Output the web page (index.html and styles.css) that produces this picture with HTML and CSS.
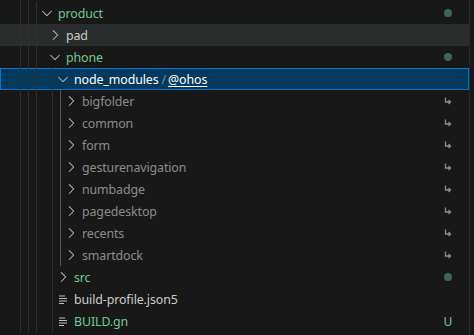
FILE: index.html
```html
<!DOCTYPE html>
<html lang="en">
<head>
    <meta charset="UTF-8">
    <title>Explorer</title>
    <link rel="stylesheet" href="styles.css">
</head>
<body>
    <div class="sidebar">
        <div class="tree">
            <div class="row cut">
                <div class="indent"><i></i><i></i></div>
            </div>

            <div class="row depth-0 untracked">
                <div class="indent"><i></i><i></i><i></i></div>
                <span class="twistie"><svg viewBox="0 0 16 16"><path d="M7.976 10.072l4.357-4.357.62.618L8.284 11h-.618L3 6.333l.619-.618 4.357 4.357z"/></svg></span>
                <span class="label">product</span>
                <span class="deco"><span class="dot"></span></span>
            </div>

            <div class="row depth-1 hover">
                <div class="indent"><i></i><i></i><i></i></div>
                <span class="twistie"><svg viewBox="0 0 16 16"><path d="M10.072 8.024L5.715 3.667l.618-.62L11 7.716v.618L6.333 13l-.618-.619 4.357-4.357z"/></svg></span>
                <span class="label">pad</span>
            </div>

            <div class="row depth-1 untracked">
                <div class="indent"><i></i><i></i><i></i></div>
                <span class="twistie"><svg viewBox="0 0 16 16"><path d="M7.976 10.072l4.357-4.357.62.618L8.284 11h-.618L3 6.333l.619-.618 4.357 4.357z"/></svg></span>
                <span class="label">phone</span>
                <span class="deco"><span class="dot"></span></span>
            </div>

            <div class="row depth-2 selected">
                <div class="indent"><i></i><i></i><i></i><i class="gap"></i><i></i></div>
                <span class="twistie"><svg viewBox="0 0 16 16"><path d="M7.976 10.072l4.357-4.357.62.618L8.284 11h-.618L3 6.333l.619-.618 4.357 4.357z"/></svg></span>
                <span class="label">node_modules<span class="sep">/</span><u>@ohos</u></span>
            </div>

            <div class="row depth-3 ignored">
                <div class="indent"><i></i><i></i><i></i><i class="gap"></i><i></i><i class="active"></i></div>
                <span class="twistie"><svg viewBox="0 0 16 16"><path d="M10.072 8.024L5.715 3.667l.618-.62L11 7.716v.618L6.333 13l-.618-.619 4.357-4.357z"/></svg></span>
                <span class="label">bigfolder</span>
                <span class="deco"><svg class="link" viewBox="0 0 8 8"><path d="M1.5 0.5v4.5h5M4.5 3l2 2-2 2"/></svg></span>
            </div>

            <div class="row depth-3 ignored">
                <div class="indent"><i></i><i></i><i></i><i class="gap"></i><i></i><i class="active"></i></div>
                <span class="twistie"><svg viewBox="0 0 16 16"><path d="M10.072 8.024L5.715 3.667l.618-.62L11 7.716v.618L6.333 13l-.618-.619 4.357-4.357z"/></svg></span>
                <span class="label">common</span>
                <span class="deco"><svg class="link" viewBox="0 0 8 8"><path d="M1.5 0.5v4.5h5M4.5 3l2 2-2 2"/></svg></span>
            </div>

            <div class="row depth-3 ignored">
                <div class="indent"><i></i><i></i><i></i><i class="gap"></i><i></i><i class="active"></i></div>
                <span class="twistie"><svg viewBox="0 0 16 16"><path d="M10.072 8.024L5.715 3.667l.618-.62L11 7.716v.618L6.333 13l-.618-.619 4.357-4.357z"/></svg></span>
                <span class="label">form</span>
                <span class="deco"><svg class="link" viewBox="0 0 8 8"><path d="M1.5 0.5v4.5h5M4.5 3l2 2-2 2"/></svg></span>
            </div>

            <div class="row depth-3 ignored">
                <div class="indent"><i></i><i></i><i></i><i class="gap"></i><i></i><i class="active"></i></div>
                <span class="twistie"><svg viewBox="0 0 16 16"><path d="M10.072 8.024L5.715 3.667l.618-.62L11 7.716v.618L6.333 13l-.618-.619 4.357-4.357z"/></svg></span>
                <span class="label">gesturenavigation</span>
                <span class="deco"><svg class="link" viewBox="0 0 8 8"><path d="M1.5 0.5v4.5h5M4.5 3l2 2-2 2"/></svg></span>
            </div>

            <div class="row depth-3 ignored">
                <div class="indent"><i></i><i></i><i></i><i class="gap"></i><i></i><i class="active"></i></div>
                <span class="twistie"><svg viewBox="0 0 16 16"><path d="M10.072 8.024L5.715 3.667l.618-.62L11 7.716v.618L6.333 13l-.618-.619 4.357-4.357z"/></svg></span>
                <span class="label">numbadge</span>
                <span class="deco"><svg class="link" viewBox="0 0 8 8"><path d="M1.5 0.5v4.5h5M4.5 3l2 2-2 2"/></svg></span>
            </div>

            <div class="row depth-3 ignored">
                <div class="indent"><i></i><i></i><i></i><i class="gap"></i><i></i><i class="active"></i></div>
                <span class="twistie"><svg viewBox="0 0 16 16"><path d="M10.072 8.024L5.715 3.667l.618-.62L11 7.716v.618L6.333 13l-.618-.619 4.357-4.357z"/></svg></span>
                <span class="label">pagedesktop</span>
                <span class="deco"><svg class="link" viewBox="0 0 8 8"><path d="M1.5 0.5v4.5h5M4.5 3l2 2-2 2"/></svg></span>
            </div>

            <div class="row depth-3 ignored">
                <div class="indent"><i></i><i></i><i></i><i class="gap"></i><i></i><i class="active"></i></div>
                <span class="twistie"><svg viewBox="0 0 16 16"><path d="M10.072 8.024L5.715 3.667l.618-.62L11 7.716v.618L6.333 13l-.618-.619 4.357-4.357z"/></svg></span>
                <span class="label">recents</span>
                <span class="deco"><svg class="link" viewBox="0 0 8 8"><path d="M1.5 0.5v4.5h5M4.5 3l2 2-2 2"/></svg></span>
            </div>

            <div class="row depth-3 ignored">
                <div class="indent"><i></i><i></i><i></i><i class="gap"></i><i></i><i class="active"></i></div>
                <span class="twistie"><svg viewBox="0 0 16 16"><path d="M10.072 8.024L5.715 3.667l.618-.62L11 7.716v.618L6.333 13l-.618-.619 4.357-4.357z"/></svg></span>
                <span class="label">smartdock</span>
                <span class="deco"><svg class="link" viewBox="0 0 8 8"><path d="M1.5 0.5v4.5h5M4.5 3l2 2-2 2"/></svg></span>
            </div>

            <div class="row depth-2 untracked">
                <div class="indent"><i></i><i></i><i></i><i class="gap"></i><i></i></div>
                <span class="twistie"><svg viewBox="0 0 16 16"><path d="M10.072 8.024L5.715 3.667l.618-.62L11 7.716v.618L6.333 13l-.618-.619 4.357-4.357z"/></svg></span>
                <span class="label">src</span>
                <span class="deco"><span class="dot"></span></span>
            </div>

            <div class="row depth-2">
                <div class="indent"><i></i><i></i><i></i><i class="gap"></i><i></i></div>
                <span class="twistie"><svg class="file" viewBox="0 0 8 9"><rect x="0" y="0.5" width="6" height="1"/><rect x="0" y="3" width="8" height="1"/><rect x="0" y="5.5" width="8" height="1"/><rect x="0" y="8" width="5" height="1"/></svg></span>
                <span class="label">build-profile.json5</span>
            </div>

            <div class="row depth-2 untracked">
                <div class="indent"><i></i><i></i><i></i><i class="gap"></i><i></i></div>
                <span class="twistie"><svg class="file" viewBox="0 0 8 9"><rect x="0" y="0.5" width="6" height="1"/><rect x="0" y="3" width="8" height="1"/><rect x="0" y="5.5" width="8" height="1"/><rect x="0" y="8" width="5" height="1"/></svg></span>
                <span class="label">BUILD.gn</span>
                <span class="deco"><span class="badge">U</span></span>
            </div>
        </div>
        <div class="scrollbar"></div>
    </div>
</body>
</html>
```

FILE: styles.css
```css
body {
    margin: 0;
    background-color: #181818;
    font-family: 'Noto Sans', 'Open Sans', sans-serif;
    font-size: 12.4px;
    letter-spacing: -0.1px;
    color: #cccccc;
    overflow: hidden;
}

.sidebar {
    display: flex;
    height: 335px;
}

.tree {
    width: 469px;
    margin-top: -20px;
}

.scrollbar {
    flex: 1;
    border-left: 1px solid #2b2b2b;
}

.row {
    position: relative;
    display: flex;
    align-items: center;
    height: 22px;
    box-sizing: border-box;
    padding-right: 16px;
    white-space: nowrap;
}

.row.hover {
    background-color: #2a2d2e;
}

.row.selected {
    background-color: #04395e;
    outline: 1px solid #0078d4;
    outline-offset: -1px;
    color: #ffffff;
}

.depth-0 { padding-left: 39px; }
.depth-1 { padding-left: 47px; }
.depth-2 { padding-left: 55px; }
.depth-3 { padding-left: 63px; }

/* indent guides sit over the row */
.indent {
    position: absolute;
    top: 0;
    left: 0;
    height: 100%;
    display: flex;
    padding-left: 20px;
    pointer-events: none;
}

.indent i {
    width: 8px;
    height: 100%;
    box-sizing: border-box;
    border-left: 1px solid #303030;
}

.indent i.gap {
    border-left-color: transparent;
}

.indent i.active {
    border-left-color: #585858;
}

.twistie {
    width: 16px;
    height: 16px;
    display: flex;
    justify-content: center;
    align-items: center;
    flex-shrink: 0;
}

.twistie svg {
    width: 16px;
    height: 16px;
    fill: #c5c5c5;
}

.twistie svg.file {
    width: 8px;
    height: 9px;
    fill: #bdbdbd;
}

.label {
    margin-left: 3px;
    padding-top: 2px;
    line-height: 20px;
}

.label .sep {
    color: #8c8c8c;
    margin: 0 2px 0 3px;
}

.label u {
    text-underline-offset: 2px;
}

.untracked .label {
    color: #73c991;
}

.ignored .label {
    color: #8c8c8c;
}

.deco {
    margin-left: auto;
    width: 10px;
    display: flex;
    justify-content: center;
    align-items: center;
}

.dot {
    width: 8px;
    height: 8px;
    border-radius: 50%;
    background-color: #73c991;
    opacity: 0.45;
}

.link {
    width: 8px;
    height: 8px;
    fill: none;
    stroke: #8c8c8c;
    stroke-width: 1.3;
}

.badge {
    font-size: 12px;
    letter-spacing: 0;
    color: #73c991;
}
```
